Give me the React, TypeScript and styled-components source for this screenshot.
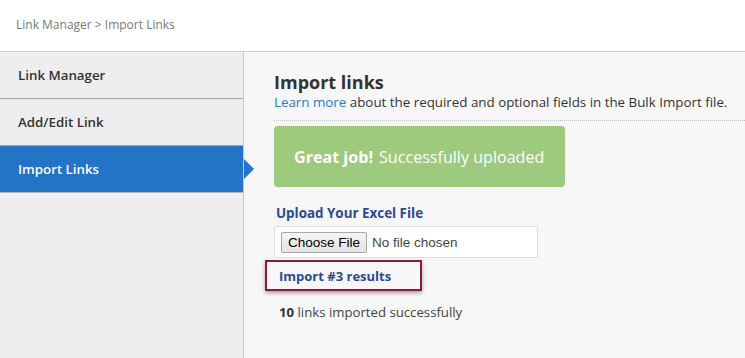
import React from "react";
import styled, { createGlobalStyle } from "styled-components";

const GlobalStyle = createGlobalStyle`
  html, body {
    margin: 0;
    padding: 0;
    background: #f7f7f7;
  }
  body {
    font-family: "Open Sans", "Liberation Sans", sans-serif;
    color: #333;
  }
`;

const navItems = ["Link Manager", "Add/Edit Link", "Import Links"];

export default function App() {
  return (
    <>
      <GlobalStyle />
      <PageSC>
        <HeaderSC>Link Manager &gt; Import Links</HeaderSC>
        <BodySC>
          <SidebarSC>
            {navItems.map((item) => (
              <NavItemSC key={item} $active={item === "Import Links"}>
                {item}
              </NavItemSC>
            ))}
          </SidebarSC>
          <MainSC>
            <TitleSC>Import links</TitleSC>
            <SubtitleSC>
              <LinkSC href="#">Learn more</LinkSC> about the required and
              optional fields in the Bulk Import file.
            </SubtitleSC>
            <DividerSC />
            <SuccessSC>
              <strong>Great job!</strong> Successfully uploaded
            </SuccessSC>
            <LabelSC>Upload Your Excel File</LabelSC>
            <FileBoxSC>
              <FileButtonSC type="button">Choose File</FileButtonSC>
              <FileTextSC>No file chosen</FileTextSC>
            </FileBoxSC>
            <ResultsSC>Import #3 results</ResultsSC>
            <CountSC>
              <b>10</b> links imported successfully
            </CountSC>
          </MainSC>
        </BodySC>
      </PageSC>
    </>
  );
}

const PageSC = styled.div`
  display: flex;
  flex-direction: column;
  height: 358px;
  overflow: hidden;
`;

const HeaderSC = styled.div`
  height: 52px;
  flex-shrink: 0;
  box-sizing: border-box;
  display: flex;
  align-items: center;
  padding: 0 0 3px 16px;
  background: #fff;
  border-bottom: 1px solid #cfcfcf;
  font-size: 12px;
  color: #7a7a7a;
`;

const BodySC = styled.div`
  display: flex;
  flex: 1;
`;

const SidebarSC = styled.div`
  width: 243px;
  flex-shrink: 0;
  background: #eeeeee;
  border-right: 1px solid #c8c8c8;
`;

const NavItemSC = styled.div<{ $active?: boolean }>`
  position: relative;
  height: 46px;
  display: flex;
  align-items: center;
  padding: 0 18px;
  font-size: 13.3px;
  font-weight: 600;
  color: ${(p) => (p.$active ? "#fff" : "#333")};
  background: ${(p) => (p.$active ? "#2373c7" : "transparent")};
  border-bottom: 1px solid ${(p) => (p.$active ? "#b5b5b5" : "#9aa6b2")};

  ${(p) =>
    p.$active &&
    `
    &::after {
      content: "";
      position: absolute;
      right: -11px;
      top: 50%;
      margin-top: -10px;
      border-top: 10px solid transparent;
      border-bottom: 10px solid transparent;
      border-left: 10px solid #2373c7;
    }
  `}
`;

const MainSC = styled.div`
  flex: 1;
  padding: 19px 0 0 30px;
  background: #f7f7f7;
`;

const TitleSC = styled.h1`
  margin: 0;
  font-size: 18px;
  font-weight: 700;
  line-height: 22px;
  color: #333;
`;

const SubtitleSC = styled.p`
  margin: 0;
  font-size: 13.35px;
  line-height: 18px;
  color: #333;
`;

const LinkSC = styled.a`
  color: #2a7ac9;
  text-decoration: none;
`;

const DividerSC = styled.div`
  margin-top: 9px;
  border-top: 1px dotted #bdbdbd;
`;

const SuccessSC = styled.div`
  margin-top: 5px;
  width: 291px;
  height: 61px;
  box-sizing: border-box;
  display: flex;
  align-items: center;
  gap: 6px;
  padding-left: 20px;
  background: #9dca7c;
  border-radius: 4px;
  color: #fff;
  font-size: 16.1px;
`;

const LabelSC = styled.div`
  margin: 17px 0 0 2px;
  font-size: 13.4px;
  font-weight: 700;
  color: #2c4a92;
`;

const FileBoxSC = styled.div`
  margin-top: 4px;
  width: 264px;
  height: 32px;
  box-sizing: border-box;
  display: flex;
  align-items: center;
  gap: 5px;
  padding: 0 6px;
  background: #fff;
  border: 1px solid #dddddd;
  border-radius: 2px;
`;

const FileButtonSC = styled.button`
  height: 21px;
  padding: 0 6px;
  font-family: "Liberation Sans", Arial, sans-serif;
  font-size: 13.5px;
  color: #000;
  background: linear-gradient(#f6f6f6, #e3e3e3);
  border: 1px solid #a8a8a8;
  border-radius: 2px;
`;

const FileTextSC = styled.span`
  font-family: "Liberation Sans", Arial, sans-serif;
  font-size: 13.5px;
  color: #444;
`;

const ResultsSC = styled.div`
  margin: 2px 0 0 -9px;
  width: 157px;
  height: 31px;
  box-sizing: border-box;
  display: flex;
  align-items: center;
  padding: 0 0 0 12px;
  border: 2px solid #8e1a32;
  box-shadow: 0 2px 4px rgba(0, 0, 0, 0.35);
  font-size: 13px;
  font-weight: 700;
  color: #2c4a92;
`;

const CountSC = styled.div`
  margin: 12px 0 0 5px;
  font-size: 13.2px;
  color: #444;

  b {
    color: #333;
  }
`;
